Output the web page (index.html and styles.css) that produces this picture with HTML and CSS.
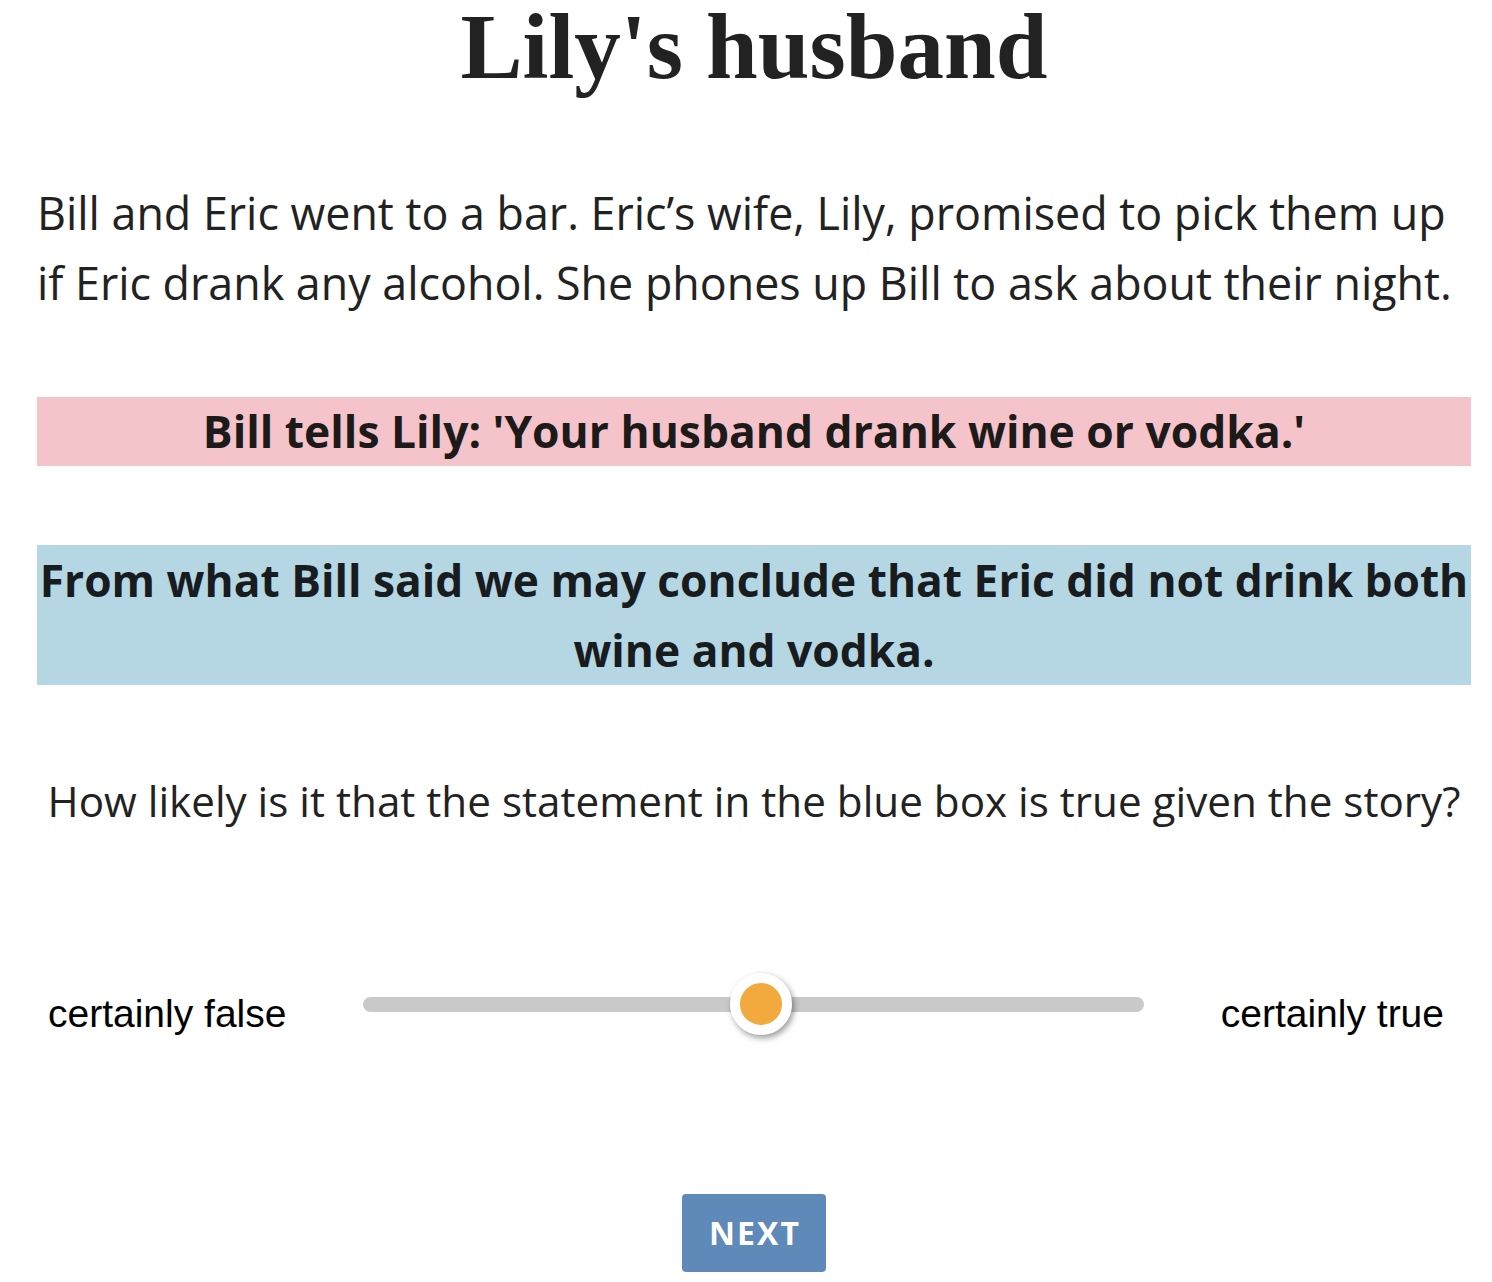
FILE: index.html
```html
<!DOCTYPE html>
<html lang="en">
<head>
<meta charset="utf-8">
<title>Lily's husband</title>
<link rel="stylesheet" href="styles.css">
</head>
<body>
<main class="page">
  <h1 class="title">Lily's husband</h1>
  <p class="story">Bill and Eric went to a bar. Eric’s wife, Lily, promised to pick them up if Eric drank any alcohol. She phones up Bill to ask about their night.</p>
  <div class="utterance">Bill tells Lily: 'Your husband drank wine or vodka.'</div>
  <div class="statement">From what Bill said we may conclude that Eric did not drink both wine and vodka.</div>
  <p class="question">How likely is it that the statement in the blue box is true given the story?</p>
  <div class="slider-row">
    <span class="label">certainly false</span>
    <div class="track">
      <div class="thumb" style="left: 51%;"></div>
    </div>
    <span class="label">certainly true</span>
  </div>
  <div class="actions">
    <button class="next" type="button">NEXT</button>
  </div>
</main>
</body>
</html>
```

FILE: styles.css
```css
html, body {
  margin: 0;
  padding: 0;
  background: #ffffff;
}

.page {
  width: 1434px;
  margin-left: 37px;
  color: #222222;
  font-family: "Open Sans", "Noto Sans", sans-serif;
}

.title {
  margin: 0;
  font-family: "Liberation Serif", "Times New Roman", serif;
  font-weight: 700;
  font-size: 93px;
  line-height: 94px;
  text-align: center;
  color: #222222;
}

.story {
  margin: 84px 0 0 0;
  font-size: 44.8px;
  line-height: 70px;
}

.utterance {
  margin-top: 79px;
  background: #f5c3ca;
  font-weight: 700;
  font-size: 44.4px;
  line-height: 69px;
  text-align: center;
  color: #1d1a1a;
}

.statement {
  margin-top: 79px;
  background: #b4d7e3;
  font-weight: 700;
  font-size: 44.3px;
  line-height: 70px;
  text-align: center;
  color: #181c1f;
}

.question {
  margin: 86px 0 0 0;
  font-size: 42.2px;
  line-height: 60px;
  text-align: center;
}

.slider-row {
  margin-top: 142px;
  display: grid;
  grid-template-columns: auto 1fr auto;
  column-gap: 77px;
  align-items: center;
  height: 62px;
  padding: 0 27px 0 11px;
}

.label {
  font-family: "Liberation Sans", Arial, sans-serif;
  font-size: 39px;
  color: #000000;
  position: relative;
  top: 10px;
}

.track {
  position: relative;
  height: 15px;
  border-radius: 8px;
  background: #c9c9c9;
}

.thumb {
  position: absolute;
  top: 50%;
  width: 42px;
  height: 42px;
  margin-left: -31px;
  margin-top: -31px;
  border: 10px solid #ffffff;
  border-radius: 50%;
  background: #f2a93d;
  box-shadow: 2px 3px 6px rgba(0, 0, 0, 0.4);
}

.actions {
  margin-top: 159px;
  display: flex;
  justify-content: center;
}

.next {
  width: 144px;
  height: 78px;
  border: none;
  border-radius: 4px;
  background: #5e89b8;
  color: #ffffff;
  font-family: "Open Sans", "Noto Sans", sans-serif;
  font-weight: 700;
  font-size: 32px;
  letter-spacing: 2px;
  padding: 0 0 2px 2px;
}
```
